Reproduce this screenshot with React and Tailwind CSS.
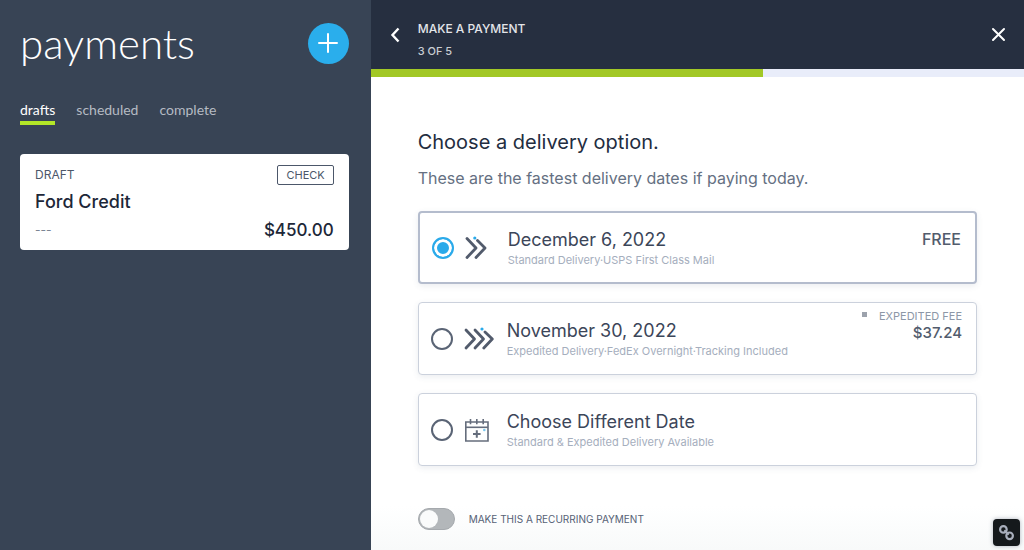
import React, { useState } from 'react';

const TABS = ['drafts', 'scheduled', 'complete'];

const OPTIONS = [
  { id: 'standard', title: 'December 6, 2022', detail: 'Standard Delivery·USPS First Class Mail', icon: DoubleChevron, price: 'FREE' },
  { id: 'expedited', title: 'November 30, 2022', detail: 'Expedited Delivery·FedEx Overnight·Tracking Included', icon: TripleChevron, fee: 'EXPEDITED FEE', price: '$37.24' },
  { id: 'custom', title: 'Choose Different Date', detail: 'Standard & Expedited Delivery Available', icon: CalendarPlus },
];

function DoubleChevron() {
  return (
    <svg width="30" height="26" viewBox="0 0 30 26" fill="none" stroke="#525b6c" strokeWidth="2.8" strokeLinecap="round" strokeLinejoin="round">
      <path d="M2 3.5L11 13L2 22.5" />
      <path d="M12.5 5.5L20 13L11 22.5" />
      <circle cx="9.8" cy="3" r="1.6" fill="#2aaaea" stroke="none" />
    </svg>
  );
}

function TripleChevron() {
  return (
    <svg width="30" height="26" viewBox="0 0 30 26" fill="none" stroke="#525b6c" strokeWidth="2.8" strokeLinecap="round" strokeLinejoin="round">
      <path d="M2 4L10.5 13L2 22" />
      <path d="M11 4L19.5 13L11 22" />
      <path d="M21 6L28.3 13L19.8 22" />
      <circle cx="18" cy="3" r="1.6" fill="#2aaaea" stroke="none" />
    </svg>
  );
}

function CalendarPlus() {
  return (
    <svg width="30" height="26" viewBox="0 0 30 26" fill="none" stroke="#656d7c" strokeWidth="1.6">
      <path d="M1.8 5H24V24H1.8Z" />
      <path d="M1.8 10.3H24" />
      <path d="M6.5 2V7.3M12.8 2V7.3M19.2 2V7.3" />
      <path d="M12.8 13.2V20.8M9 17H16.6" strokeWidth="2" />
      <circle cx="20.3" cy="13" r="1.3" fill="#7cc8ee" stroke="none" />
    </svg>
  );
}

function DeliveryOption({ option, checked, onSelect }) {
  const Icon = option.icon;
  return (
    <label
      className={`flex items-center min-h-[73px] pl-3 pr-[14px] bg-white rounded cursor-pointer shadow-[0_2px_6px_rgba(60,80,110,0.1)] ${checked ? 'border-2 border-[#b4bccd]' : 'border border-[#cbd1dc]'}`}
    >
      <input
        type="radio"
        name="delivery"
        checked={checked}
        onChange={() => onSelect(option.id)}
        className="appearance-none shrink-0 size-[22px] rounded-full border-2 border-[#5a6475] bg-white checked:border-[#2aaaea] checked:bg-[#2aaaea] checked:shadow-[inset_0_0_0_3px_white]"
      />
      <span className="ml-[11px] shrink-0"><Icon /></span>
      <span className="flex-1 min-w-0 ml-[13px] pt-px">
        <span className="block text-[18px] leading-6 text-[#3c4659]">{option.title}</span>
        <span className="block text-[11px] leading-4 text-[#a5aebd]">{option.detail}</span>
      </span>
      {option.price && (
        <span className="self-start text-right font-medium text-[#525c6d]">
          {option.fee ? (
            <>
              <span className="flex items-start gap-3 mt-[7px] text-[11px] leading-3 font-normal text-[#8d97a7]">
                <span className="size-[5px] mt-[2px] bg-[#9ca2ac]" />
                {option.fee}
              </span>
              <span className="block text-[15px] leading-5 mt-px">{option.price}</span>
            </>
          ) : (
            <span className="block text-[16px] leading-5 mt-4">{option.price}</span>
          )}
        </span>
      )}
    </label>
  );
}

function PaymentsPanel() {
  const [tab, setTab] = useState('drafts');
  return (
    <aside className="w-[36.2%] shrink-0 bg-[#384455] pl-5 pr-[22px] pt-5">
      <div className="flex items-center justify-between">
        <h1 className="font-['Lato'] font-light text-[42px] leading-[46px] text-white">payments</h1>
        <button type="button" aria-label="New payment" className="flex items-center justify-center size-[41px] rounded-full bg-[#2aaeec]">
          <svg width="20" height="20" viewBox="0 0 20 20" stroke="white" strokeWidth="2" strokeLinecap="round">
            <path d="M10 1V19M1 10H19" />
          </svg>
        </button>
      </div>

      <nav className="flex gap-[21px] mt-[34px] font-['Lato'] text-[14px] leading-5">
        {TABS.map(name => (
          <button
            key={name}
            type="button"
            onClick={() => setTab(name)}
            className={`pb-px border-b-4 ${tab === name ? 'border-[#b3e728] text-white' : 'border-transparent text-[#b5bbc3]'}`}
          >
            {name}
          </button>
        ))}
      </nav>

      <article className="mt-[29px] px-[15px] pt-[11px] pb-2 bg-white rounded text-[#1d2738]">
        <div className="flex items-center justify-between">
          <span className="text-[12px] leading-5 text-[#4c576a]">DRAFT</span>
          <span className="px-2 text-[11px] leading-[18px] text-[#4c576a] border border-[#4c576a] rounded-xs">CHECK</span>
        </div>
        <h2 className="text-[18px] leading-6 mt-[5px] font-medium">Ford Credit</h2>
        <div className="flex items-center justify-between mt-1">
          <span className="text-xs text-[#7b8594]">---</span>
          <span className="text-[17px] leading-6 font-medium">$450.00</span>
        </div>
      </article>
    </aside>
  );
}

export default function App() {
  const [selected, setSelected] = useState('standard');
  const [recurring, setRecurring] = useState(false);

  return (
    <div className="flex min-h-screen bg-white font-['Inter',sans-serif]">
      <PaymentsPanel />

      <main className="flex-1 min-w-0 bg-linear-to-b from-white from-92% to-[#f8fafa]">
        {/* Header */}
        <header className="flex items-center h-[69px] pl-4 pr-[18px] bg-[#262f40] text-white">
          <button type="button" aria-label="Back" className="mr-[15px]">
            <svg width="16" height="16" viewBox="0 0 16 16" fill="none" stroke="currentColor" strokeWidth="2.4">
              <path d="M11.5 1.5L5.5 8L11.5 14.5" />
            </svg>
          </button>
          <div className="flex-1 pt-[10px]">
            <p className="text-[12px] leading-[22px] font-medium text-[#e3e5e9]">MAKE A PAYMENT</p>
            <p className="text-[11px] leading-[22px] font-medium text-[#c9cdd3]">3 OF 5</p>
          </div>
          <button type="button" aria-label="Close">
            <svg width="15" height="15" viewBox="0 0 15 15" stroke="currentColor" strokeWidth="2" strokeLinecap="round">
              <path d="M2 2L13 13M13 2L2 13" />
            </svg>
          </button>
        </header>
        <div className="h-2 bg-[#e9edfa]">
          <div className="h-full w-3/5 bg-[#a2c826]" />
        </div>

        {/* Delivery options */}
        <div className="px-[47px] pt-[51px] pb-[18px]">
          <h2 className="text-[20px] leading-7 text-[#232d3f]">Choose a delivery option.</h2>
          <p className="text-[16px] leading-6 mt-[10px] text-[#657082]">These are the fastest delivery dates if paying today.</p>

          <fieldset aria-label="Delivery option" className="flex flex-col gap-[18px] mt-[21px]">
            {OPTIONS.map(option => (
              <DeliveryOption key={option.id} option={option} checked={selected === option.id} onSelect={setSelected} />
            ))}
          </fieldset>

          <label className="flex items-center gap-[14px] mt-[42px] text-[10px] leading-4 text-[#566175] cursor-pointer">
            <input
              type="checkbox"
              role="switch"
              checked={recurring}
              onChange={e => setRecurring(e.target.checked)}
              className="appearance-none flex items-center w-[37px] h-[22px] px-px rounded-full bg-[#b3b7ba] border border-[#a5a9ad] checked:bg-[#2aaeec] before:block before:size-[18px] before:rounded-full before:bg-[#fafbfb] checked:before:ml-auto"
            />
            MAKE THIS A RECURRING PAYMENT
          </label>
        </div>
      </main>

      <button type="button" aria-label="Copy link" className="fixed right-1 bottom-1 flex items-center justify-center size-[27px] rounded-sm bg-[#15191c] shadow-[0_0_4px_rgba(100,110,130,0.5)]">
        <svg width="18" height="18" viewBox="0 0 18 18" fill="none" stroke="#a9afbd" strokeWidth="2.2">
          <circle cx="5.4" cy="5.4" r="3.3" />
          <circle cx="11.6" cy="11.8" r="3.3" />
          <path d="M7 7L10 10" strokeLinecap="round" />
        </svg>
      </button>
    </div>
  );
}
